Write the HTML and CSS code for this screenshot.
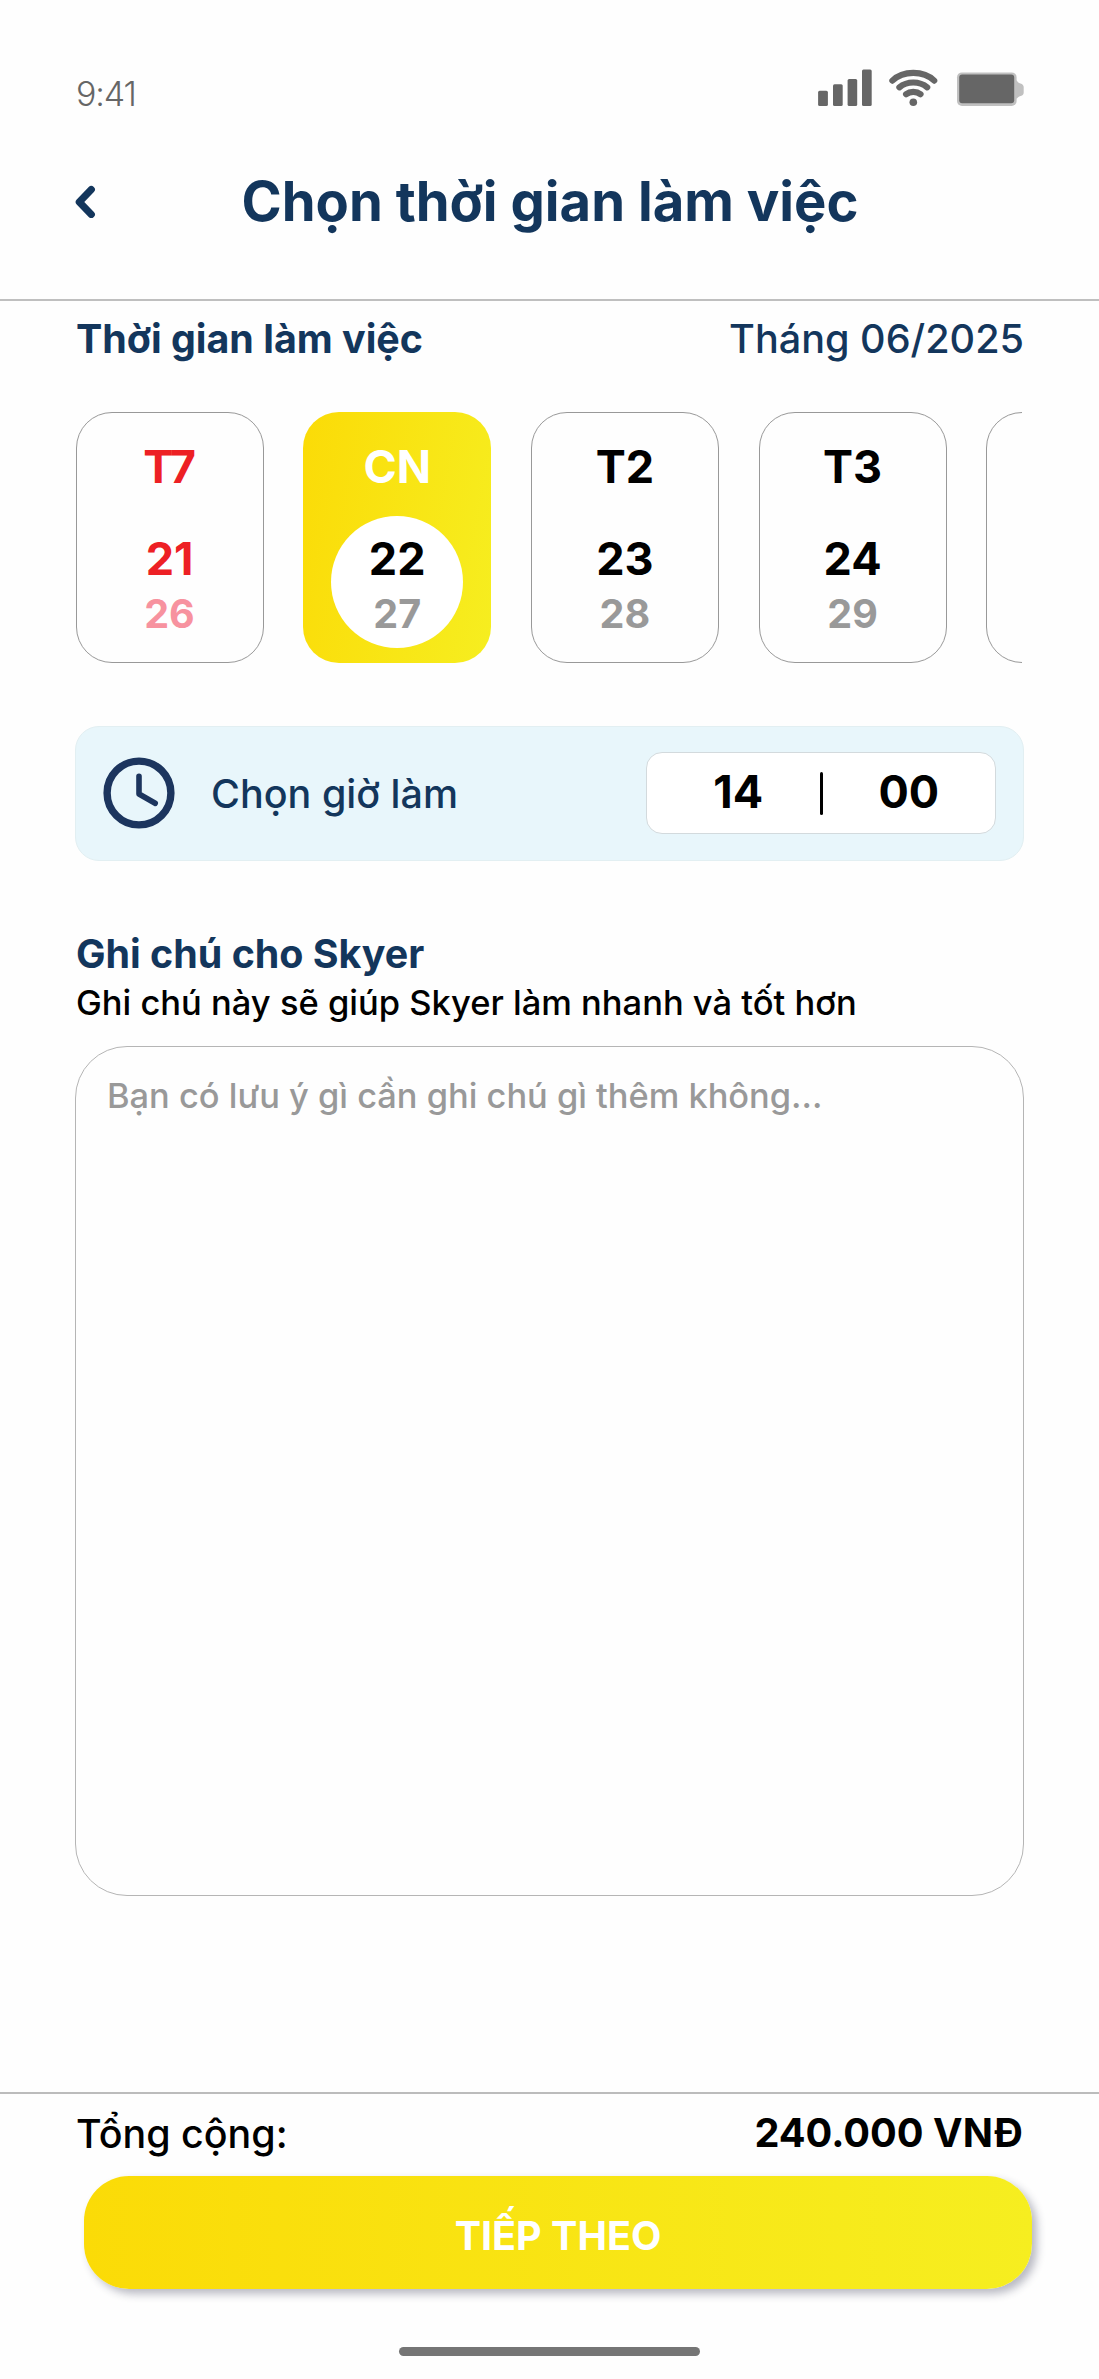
FILE: index.html
```html
<!DOCTYPE html>
<html lang="vi">
<head>
<meta charset="utf-8">
<meta name="viewport" content="width=device-width, initial-scale=1">
<title>Chọn thời gian làm việc</title>
<link rel="stylesheet" href="styles.css">
</head>
<body>
<div class="screen">
  <header class="header">
    <div class="status">
      <span class="clock-time">9:41</span>
      <svg class="status-icons" viewBox="818 69 206 38" width="206" height="38">
        <g fill="#666"><rect x="818.1" y="90.7" width="9.8" height="15.3" rx="1.5"/><rect x="833" y="84.2" width="9.7" height="21.8" rx="1.5"/><rect x="847.6" y="79" width="9.6" height="27" rx="1.5"/><rect x="862" y="69.5" width="9.7" height="36.5" rx="1.5"/></g>
        <g fill="none" stroke="#666" stroke-width="6.2" stroke-linecap="round"><path d="M892.4 80.6C903 70.2 923.6 70.2 934.2 80.6"/><path d="M899.4 87.3C907 80.9 919.6 80.9 927.2 87.3"/><path d="M906.1 94.2C910 91.2 916.6 91.2 920.5 94.2"/></g>
        <circle cx="913.3" cy="102.2" r="3.8" fill="#666"/>
        <path d="M1015 80.5h1.7l1.3 1.7q1 .9 2.5 1.2 3.2 1 3.2 3.6v5.5q0 2.600-3 3.400-1.800.4-2.500 1.300l-1.300 1.300h-1.900z" fill="#c0c0c0"/>
        <rect x="957" y="72.4" width="59.6" height="33.6" rx="5" fill="#c0c0c0"/><rect x="959.2" y="74.6" width="55" height="28.6" rx="3" fill="#666"/>
      </svg>
    </div>
    <div class="title-bar">
      <svg class="back" viewBox="0 0 22 34" width="22" height="34" fill="none" stroke="#13365c" stroke-width="7.2" stroke-linecap="round" stroke-linejoin="round"><path d="M16.300 5.600 4.300 18 16.300 30.500"/></svg>
      <h1 class="title">Chọn thời gian làm việc</h1>
    </div>
  </header>

  <main class="content">
    <div class="section-head">
      <h2 class="heading">Thời gian làm việc</h2>
      <span class="month">Tháng 06/2025</span>
    </div>

    <div class="days">
      <div class="day weekend"><span class="weekday">T7</span><div class="dates"><span class="solar">21</span><span class="lunar">26</span></div></div>
      <div class="day selected"><span class="weekday">CN</span><div class="dates"><span class="solar">22</span><span class="lunar">27</span></div></div>
      <div class="day"><span class="weekday">T2</span><div class="dates"><span class="solar">23</span><span class="lunar">28</span></div></div>
      <div class="day"><span class="weekday">T3</span><div class="dates"><span class="solar">24</span><span class="lunar">29</span></div></div>
      <div class="day"></div>
    </div>

    <div class="time-row">
      <svg class="clock" viewBox="0 0 72 72" width="72" height="72" fill="none" stroke="#1c355e" stroke-linecap="round" stroke-linejoin="round"><circle cx="36" cy="36" r="31.9" stroke-width="7.4"/><path d="M36 19.2V37L52.2 46.3" stroke-width="5.6"/></svg>
      <span class="time-label">Chọn giờ làm</span>
      <div class="time-box"><span class="hour">14</span><span class="divider"></span><span class="minute">00</span></div>
    </div>

    <h2 class="heading note-heading">Ghi chú cho Skyer</h2>
    <p class="note-hint">Ghi chú này sẽ giúp Skyer làm nhanh và tốt hơn</p>
    <div class="note-box">Bạn có lưu ý gì cần ghi chú gì thêm không...</div>
  </main>

  <footer class="footer">
    <div class="total"><span class="total-label">Tổng cộng:</span><span class="total-price">240.000 VNĐ</span></div>
    <div class="next">TIẾP THEO</div>
    <div class="home-bar"></div>
  </footer>
</div>
</body>
</html>
```
FILE: styles.css
```css
* { box-sizing: border-box; }

body {
  margin: 0;
  background: #fefefe;
  color: #000;
  font-family: Inter, "Liberation Sans", sans-serif;
}

h1, h2, p { margin: 0; }
svg { display: block; flex: none; }

.screen {
  display: flex;
  flex-direction: column;
  width: 1099px;
  height: 2379px;
  overflow: hidden;
}

.header {
  height: 301px;
  padding: 69px 75px 0;
  border-bottom: 2px solid #bfbfbf;
}

.status {
  display: flex;
  justify-content: space-between;
  height: 97px;
}

.clock-time {
  padding: 2.6px 0 0 1px;
  color: #666;
  font-size: 34px;
  font-weight: 300;
  letter-spacing: -1.1px;
  line-height: 44px;
}

.title-bar {
  display: grid;
  grid-template-columns: 22px 1fr 22px;
  align-items: center;
  height: 70px;
}

.title {
  padding-left: 1px;
  color: #13365c;
  font-size: 54.4px;
  font-weight: 700;
  line-height: 70px;
  text-align: center;
}

.content {
  flex: 1;
  padding: 14.4px 75px 0;
}

.section-head {
  display: flex;
  justify-content: space-between;
  padding-left: 1px;
  line-height: 48px;
}

.heading {
  color: #13365c;
  font-size: 39.4px;
  font-weight: 700;
  line-height: 48px;
}

.month {
  color: #13365c;
  font-size: 39.6px;
  font-weight: 450;
}

.days {
  display: flex;
  gap: 39.7px;
  width: 947px;
  margin-top: 49px;
  padding-left: 0.5px;
  overflow: hidden;
}

.day {
  display: flex;
  flex: none;
  flex-direction: column;
  align-items: center;
  width: 188px;
  height: 251px;
  padding-top: 26.5px;
  border: 1px solid #999;
  border-radius: 36px;
  font-weight: 700;
}

.weekday, .solar {
  font-size: 45px;
  line-height: 54px;
}

.dates {
  display: flex;
  flex-direction: column;
  align-items: center;
  width: 132px;
  height: 132px;
  margin-top: 22px;
  padding-top: 16px;
  border-radius: 50%;
}

.lunar {
  margin-top: 4px;
  color: #999;
  font-size: 39.5px;
  line-height: 48px;
}

.weekend { color: #ed2024; }
.weekend .lunar { color: #f7929f; }

.selected {
  border-color: transparent;
  background: linear-gradient(100deg, #fbdb07, #f6ee20) border-box;
  color: #fff;
}

.selected .dates { background: #fff; color: #000; }

.time-row {
  display: flex;
  align-items: center;
  height: 135px;
  margin-top: 62.3px;
  padding: 0 27px;
  border: 1px solid #e2eff2;
  border-radius: 24px;
  background: #e8f6fb;
}

.time-label {
  margin-left: 36px;
  padding-top: 1px;
  color: #13365c;
  font-size: 39.5px;
  font-weight: 450;
}

.time-box {
  display: grid;
  grid-template-columns: 1fr 3px 1fr;
  align-items: center;
  width: 350px;
  height: 82px;
  margin-left: auto;
  border: 1px solid #d3dadd;
  border-radius: 16px;
  background: #fff;
}

.hour, .minute {
  padding-bottom: 3px;
  font-size: 45px;
  font-weight: 700;
  text-align: center;
}

.hour { padding-left: 10px; }

.divider {
  height: 43px;
  border-radius: 2px;
  background: #000;
}

.note-heading { margin-top: 69px; padding-left: 1px; }

.note-hint {
  margin-top: 3.8px;
  padding-left: 1px;
  font-size: 34.5px;
  font-weight: 450;
  line-height: 44px;
}

.note-box {
  height: 850px;
  margin-top: 20.5px;
  padding: 27.5px 31px;
  border: 1px solid #b5b5b5;
  border-radius: 52px;
  color: #999;
  font-size: 34.4px;
  font-weight: 450;
  line-height: 44px;
}

.footer {
  height: 287px;
  padding: 15.3px 75px 0;
  border-top: 2px solid #bcbcbc;
}

.total {
  display: flex;
  justify-content: space-between;
  height: 66.7px;
  padding: 0 1px;
  font-size: 39.4px;
  line-height: 48px;
}

.total-label { padding-top: 1px; font-weight: 450; }
.total-price { font-size: 39.7px; font-weight: 700; }

.next {
  width: 948px;
  height: 113px;
  margin-left: 9px;
  border-radius: 45px;
  background: linear-gradient(90deg, #fbdb07, #f6ee20);
  box-shadow: 5px 5px 8px rgba(40, 45, 70, 0.32);
  color: #fff;
  font-size: 39.5px;
  font-weight: 700;
  line-height: 120px;
  text-align: center;
}

.home-bar {
  width: 301px;
  height: 9.5px;
  margin: 58px auto 0;
  border-radius: 5px;
  background: #757575;
}
```
